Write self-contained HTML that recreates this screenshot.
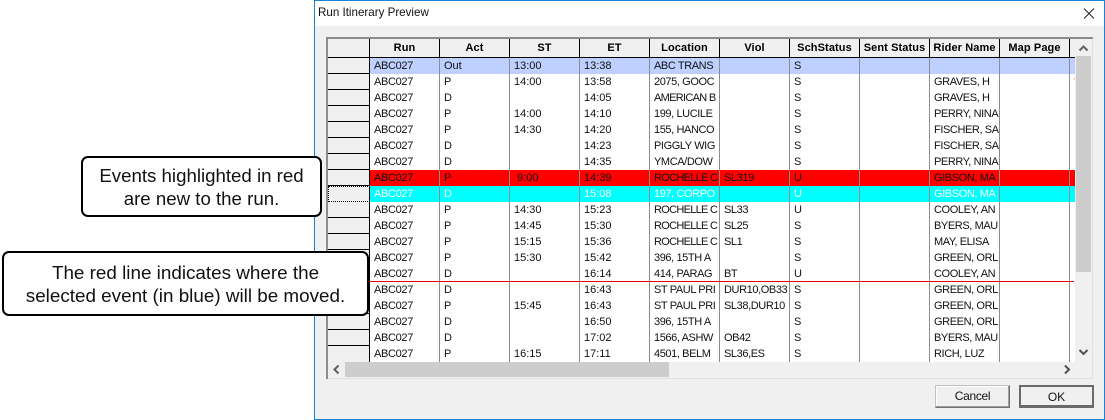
<!DOCTYPE html>
<html><head><meta charset="utf-8"><title>Run Itinerary Preview</title>
<style>
html,body{margin:0;padding:0;background:#fff}
body{position:relative;width:1105px;height:420px;overflow:hidden;font-family:"Liberation Sans",Arial,sans-serif;color:#000}
div{box-sizing:border-box}
.a{position:absolute}
#win{left:314px;top:0;width:791px;height:420px;background:#f0f0f0;border:1px solid #1883d7}
#tb{left:315px;top:1px;width:789px;height:25px;background:#fff}
#title{left:318px;top:5px;font-size:11.6px;line-height:16px;color:#111;white-space:nowrap}
#grid{left:370px;top:58px;width:705px;height:304px;background:#fff;overflow:hidden}
.r{position:absolute;left:0;width:705px;height:16px;display:flex;font-size:11px;line-height:16px;color:#111;white-space:nowrap}
.r span{display:block;flex:0 0 70px;width:70px;padding-left:4px;overflow:hidden;box-sizing:border-box}
.r span:nth-child(1){letter-spacing:-.33px}
.r span:nth-child(5),.r span:nth-child(6),.r span:nth-child(9){letter-spacing:-.4px}
.r span.n{letter-spacing:-.7px}
.r span:last-child{flex:0 0 5px;width:5px;color:#b8860b}
.v{position:absolute;top:0;width:1px;height:304px;background:#8c8c8c}
#hd{left:328px;top:39px;width:747px;height:19px;background:#f0f0f0;border-bottom:1px solid #000;font-size:11px;font-weight:bold;line-height:19px;letter-spacing:.1px;color:#000}
#hd span{position:absolute;top:0;height:18px;width:70px;text-align:center;border-right:1px solid #000;box-sizing:border-box;white-space:nowrap}
.rh{position:absolute;left:328px;width:42px;height:16px;background:#f0f0f0;border-bottom:1px solid #000;border-right:1px solid #000}
.call{position:absolute;background:#fff;border:2px solid #000;border-radius:7px;font-size:18.67px;line-height:23px;text-align:center;color:#111;white-space:nowrap}
.btn{position:absolute;top:385px;height:23px;text-align:center;font-family:"Liberation Sans",Arial,sans-serif;font-size:12px;line-height:21px;background:#f0f0f0;color:#111}
</style></head>
<body>
<div class="a" id="win"></div>
<div class="a" id="tb"></div>
<div class="a" id="title">Run Itinerary Preview</div>
<svg class="a" style="left:1083px;top:8px" width="12" height="11" viewBox="0 0 12 11"><path d="M1 .5 11 10.5M11 .5 1 10.5" stroke="#222" stroke-width="1" fill="none"/></svg>

<div class="a" style="left:326px;top:37px;width:767px;height:2px;background:#8c8c8c"></div>
<div class="a" style="left:326px;top:37px;width:2px;height:342px;background:#8c8c8c"></div>
<div class="a" style="left:328px;top:378px;width:765px;height:1px;background:#e0e0e0"></div>
<div class="a" style="left:1092px;top:39px;width:1px;height:340px;background:#e0e0e0"></div>

<div class="a" id="hd">
<span style="left:0;width:42px"></span>
<span style="left:42px">Run</span>
<span style="left:112px">Act</span>
<span style="left:182px">ST</span>
<span style="left:252px">ET</span>
<span style="left:322px">Location</span>
<span style="left:392px">Viol</span>
<span style="left:462px">SchStatus</span>
<span style="left:532px">Sent Status</span>
<span style="left:602px">Rider Name</span>
<span style="left:672px">Map Page</span>
</div>

<div class="rh" style="top:58px"></div>
<div class="rh" style="top:74px"></div>
<div class="rh" style="top:90px"></div>
<div class="rh" style="top:106px"></div>
<div class="rh" style="top:122px"></div>
<div class="rh" style="top:138px"></div>
<div class="rh" style="top:154px"></div>
<div class="rh" style="top:170px"></div>
<div class="rh" style="top:186px;border-top:1px dotted #000;border-bottom:1px dotted #000;border-left:1px dotted #000"></div>
<div class="rh" style="top:202px"></div>
<div class="rh" style="top:218px"></div>
<div class="rh" style="top:234px"></div>
<div class="rh" style="top:250px"></div>
<div class="rh" style="top:266px"></div>
<div class="rh" style="top:282px"></div>
<div class="rh" style="top:298px"></div>
<div class="rh" style="top:314px"></div>
<div class="rh" style="top:330px"></div>
<div class="rh" style="top:346px;height:16px;border-bottom:0"></div>

<div class="a" id="grid">
<div class="a" style="left:0;top:0;width:705px;height:16px;background:#bdd0ff"></div>
<div class="a" style="left:0;top:112px;width:705px;height:16px;background:#ff0000"></div>
<div class="a" style="left:0;top:128px;width:705px;height:16px;background:#00ffff"></div>
<div class="v" style="left:69px"></div><div class="v" style="left:139px"></div><div class="v" style="left:209px"></div><div class="v" style="left:279px"></div><div class="v" style="left:349px"></div><div class="v" style="left:419px"></div><div class="v" style="left:489px"></div><div class="v" style="left:559px"></div><div class="v" style="left:629px"></div><div class="v" style="left:699px"></div>
<div class="r" style="top:0"><span>ABC027</span><span>Out</span><span>13:00</span><span>13:38</span><span>ABC TRANS</span><span></span><span>S</span><span></span><span></span><span></span><span></span></div>
<div class="r" style="top:16px"><span>ABC027</span><span>P</span><span>14:00</span><span>13:58</span><span>2075, GOOC</span><span></span><span>S</span><span></span><span>GRAVES, H</span><span></span><span>'</span></div>
<div class="r" style="top:32px"><span>ABC027</span><span>D</span><span></span><span>14:05</span><span class="n">AMERICAN B</span><span></span><span>S</span><span></span><span>GRAVES, H</span><span></span><span></span></div>
<div class="r" style="top:48px"><span>ABC027</span><span>P</span><span>14:00</span><span>14:10</span><span>199, LUCILE</span><span></span><span>S</span><span></span><span>PERRY, NINA</span><span></span><span>:</span></div>
<div class="r" style="top:64px"><span>ABC027</span><span>P</span><span>14:30</span><span>14:20</span><span>155, HANCO</span><span></span><span>S</span><span></span><span>FISCHER, SA</span><span></span><span>.</span></div>
<div class="r" style="top:80px"><span>ABC027</span><span>D</span><span></span><span>14:23</span><span>PIGGLY WIG</span><span></span><span>S</span><span></span><span>FISCHER, SA</span><span></span><span>.</span></div>
<div class="r" style="top:96px"><span>ABC027</span><span>D</span><span></span><span>14:35</span><span>YMCA/DOW</span><span></span><span>S</span><span></span><span>PERRY, NINA</span><span></span><span>.</span></div>
<div class="r" style="top:112px"><span>ABC027</span><span>P</span><span>&nbsp;9:00</span><span>14:39</span><span class="n">ROCHELLE C</span><span>SL319</span><span>U</span><span></span><span>GIBSON, MA</span><span></span><span></span></div>
<div class="r" style="top:128px;color:#fff"><span>ABC027</span><span>D</span><span></span><span>15:08</span><span>197, CORPO</span><span></span><span>U</span><span></span><span>GIBSON, MA</span><span></span><span></span></div>
<div class="r" style="top:144px"><span>ABC027</span><span>P</span><span>14:30</span><span>15:23</span><span class="n">ROCHELLE C</span><span>SL33</span><span>U</span><span></span><span>COOLEY, AN</span><span></span><span>.</span></div>
<div class="r" style="top:160px"><span>ABC027</span><span>P</span><span>14:45</span><span>15:30</span><span class="n">ROCHELLE C</span><span>SL25</span><span>S</span><span></span><span>BYERS, MAU</span><span></span><span>.</span></div>
<div class="r" style="top:176px"><span>ABC027</span><span>P</span><span>15:15</span><span>15:36</span><span class="n">ROCHELLE C</span><span>SL1</span><span>S</span><span></span><span>MAY, ELISA</span><span></span><span>.</span></div>
<div class="r" style="top:192px"><span>ABC027</span><span>P</span><span>15:30</span><span>15:42</span><span>396, 15TH A</span><span></span><span>S</span><span></span><span>GREEN, ORL</span><span></span><span>.</span></div>
<div class="r" style="top:208px"><span>ABC027</span><span>D</span><span></span><span>16:14</span><span>414, PARAG</span><span>BT</span><span>U</span><span></span><span>COOLEY, AN</span><span></span><span>.</span></div>
<div class="r" style="top:224px"><span>ABC027</span><span>D</span><span></span><span>16:43</span><span>ST PAUL PRI</span><span>DUR10,OB33</span><span>S</span><span></span><span>GREEN, ORL</span><span></span><span>.</span></div>
<div class="r" style="top:240px"><span>ABC027</span><span>P</span><span>15:45</span><span>16:43</span><span>ST PAUL PRI</span><span>SL38,DUR10</span><span>S</span><span></span><span>GREEN, ORL</span><span></span><span>.</span></div>
<div class="r" style="top:256px"><span>ABC027</span><span>D</span><span></span><span>16:50</span><span>396, 15TH A</span><span></span><span>S</span><span></span><span>GREEN, ORL</span><span></span><span>.</span></div>
<div class="r" style="top:272px"><span>ABC027</span><span>D</span><span></span><span>17:02</span><span>1566, ASHW</span><span>OB42</span><span>S</span><span></span><span>BYERS, MAU</span><span></span><span>.</span></div>
<div class="r" style="top:288px"><span>ABC027</span><span>P</span><span>16:15</span><span>17:11</span><span>4501, BELM</span><span>SL36,ES</span><span>S</span><span></span><span>RICH, LUZ</span><span></span><span>.</span></div>
<div class="a" style="left:0;top:223px;width:704px;height:1px;background:#e80000"></div>
</div>

<div class="a" style="left:1076px;top:56px;width:15px;height:216px;background:#cdcdcd"></div>
<div class="a" style="left:345px;top:362px;width:324px;height:15px;background:#cdcdcd"></div>
<svg class="a" style="left:1076px;top:44px" width="15" height="9" viewBox="0 0 15 9"><path d="M3.5 6.5 7.5 2.5 11.5 6.5" stroke="#606060" stroke-width="2" fill="none"/></svg>
<svg class="a" style="left:1076px;top:348px" width="15" height="9" viewBox="0 0 15 9"><path d="M3.5 2 7.5 6 11.5 2" stroke="#505050" stroke-width="2" fill="none"/></svg>
<svg class="a" style="left:332px;top:364px" width="9" height="11" viewBox="0 0 9 11"><path d="M6.5 1.5 2.5 5.5 6.5 9.5" stroke="#606060" stroke-width="2" fill="none"/></svg>
<svg class="a" style="left:1063px;top:364px" width="9" height="11" viewBox="0 0 9 11"><path d="M2 1.5 6 5.5 2 9.5" stroke="#505050" stroke-width="2" fill="none"/></svg>

<div class="btn" style="left:935px;width:75px;border:1px solid;border-color:#c0c0c0 #707070 #707070 #c0c0c0;box-shadow:inset -1px -1px 0 #a0a0a0,inset 1px 1px 0 #fff;letter-spacing:-.3px">Cancel</div>
<div class="btn" style="left:1019px;width:75px;border:2px solid #6a6a6a;border-bottom-width:3px;line-height:20px">OK</div>

<div class="call" style="left:81px;top:156px;width:241px;height:61px;padding-top:6px">Events highlighted in red<br>are new to the run.</div>
<div class="call" style="left:2px;top:251px;width:367px;height:65px;padding-top:8px;font-size:18.85px">The red line indicates where the<br>selected event (in blue) will be moved.</div>
</body></html>
